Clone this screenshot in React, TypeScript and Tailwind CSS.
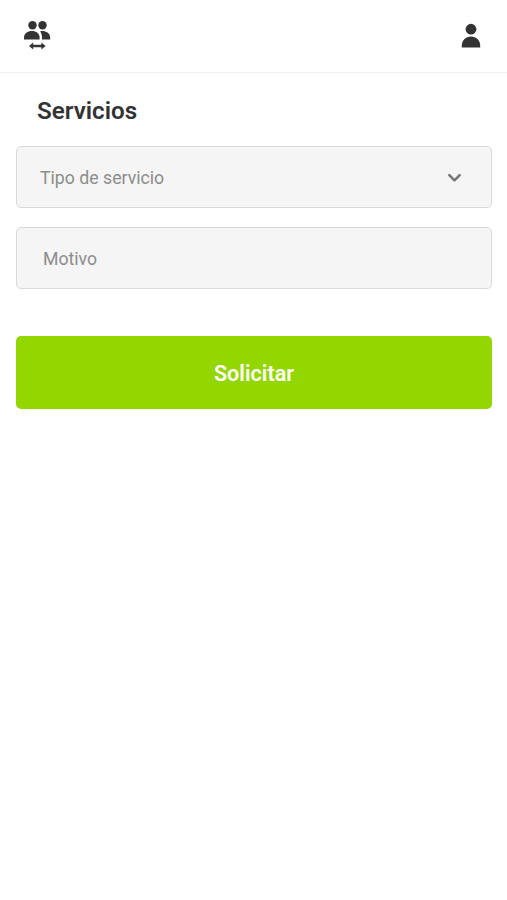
import { HTMLProps, ReactNode } from "react";

interface FieldProps extends HTMLProps<HTMLDivElement> {
  children: ReactNode;
}

const GroupIcon = () => (
  <svg width="28" height="30" viewBox="0 0 28 30" fill="#333333">
    <circle cx="9.5" cy="5.2" r="4.2" />
    <circle cx="19.5" cy="5.2" r="4.2" />
    <path d="M1 19.400v-1.800c0-4 3.600-6.500 7.900-6.500s7.700 2.500 7.700 6.500v1.800z" />
    <path d="M19 19.400v-2c0-2.300-.7-4.300-1.800-6.200 5.700-.6 10 2 10 6.500v1.700z" />
    <path d="M6 26l4.200-3.600v2.400h8.200v-2.400l4.200 3.600-4.200 3.600v-2.400h-8.200v2.400z" />
  </svg>
);

const UserIcon = () => (
  <svg width="20" height="26" viewBox="0 0 20 26" fill="#333333">
    <circle cx="10" cy="6.200" r="5.400" />
    <path d="M.8 24.500v-1.800c0-5.400 4-9.200 9.200-9.200s9.200 3.800 9.200 9.200v1.800z" />
  </svg>
);

const ChevronIcon = () => (
  <svg width="15" height="10" viewBox="0 0 15 10" fill="none">
    <path
      d="M2.300 2.200 7.500 7.300l5.200-5.100"
      stroke="#757575"
      strokeWidth="2.500"
      strokeLinecap="round"
      strokeLinejoin="round"
    />
  </svg>
);

const Header = () => (
  <header className="flex h-[73px] items-start justify-between border-b border-[#f2f2f2] pt-5 pr-[26px] pl-[23px]">
    <button type="button" aria-label="Grupo">
      <GroupIcon />
    </button>
    <button type="button" aria-label="Perfil" className="pt-[3px]">
      <UserIcon />
    </button>
  </header>
);

const Field = ({ children, ...props }: FieldProps) => (
  <div
    className="flex h-[62px] items-center justify-between rounded-[5px] border border-[#d9d9d9] bg-[#f5f5f5] pt-0.5 text-[17.7px] text-[#8c8c8c]"
    {...props}
  >
    {children}
  </div>
);

export default function App() {
  return (
    <div className="min-h-screen bg-white font-['Roboto',sans-serif]">
      <Header />
      <main className="flex flex-col pr-[15px] pl-4">
        <h1 className="pt-[22px] pl-[21px] text-[24.2px] leading-8 font-semibold text-[#333333]">
          Servicios
        </h1>
        <div className="flex flex-col gap-[19px] pt-[19px]">
          <Field>
            <span className="pl-[23px]">Tipo de servicio</span>
            <span className="pr-[29px]">
              <ChevronIcon />
            </span>
          </Field>
          <Field>
            <span className="pl-[26px]">Motivo</span>
          </Field>
        </div>
        <button
          type="button"
          className="mt-[47px] h-[73px] rounded-[5px] bg-[#94d600] pt-[3px] text-[21.6px] font-semibold text-white"
        >
          Solicitar
        </button>
      </main>
    </div>
  );
}
